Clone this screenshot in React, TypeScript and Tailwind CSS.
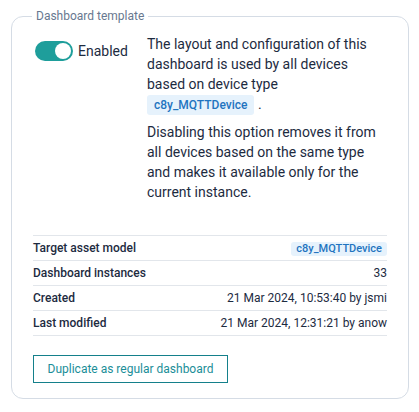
import React from "react";

const rows: { label: string; value: React.ReactNode }[] = [
  {
    label: "Target asset model",
    value: (
      <span className="inline-flex h-[14px] items-center rounded-[3px] bg-[#e6f2fc] px-[5px] text-[11px] font-medium leading-none text-[#1f74c0]">
        c8y_MQTTDevice
      </span>
    ),
  },
  { label: "Dashboard instances", value: "33" },
  { label: "Created", value: "21 Mar 2024, 10:53:40 by jsmi" },
  { label: "Last modified", value: "21 Mar 2024, 12:31:21 by anow" },
];

export default function App() {
  return (
    <div
      className="w-[419px] h-[412px] bg-white pt-[7px] pl-[11px] pr-[10px]"
      style={{ fontFamily: "Roboto, 'Liberation Sans', sans-serif" }}
    >
      <fieldset className="rounded-[12px] border border-[#d5dce5] px-[21px] pt-[9px] pb-[15px]">
        <legend className="px-[4px] text-[12px] leading-[18px] text-[#687890] -ml-[1px]">
          Dashboard template
        </legend>
        <div className="flex items-start">
          <div className="mt-[7px] ml-[2px] flex w-[112px] shrink-0 items-center gap-[5px]">
            <div className="flex h-[20px] w-[38px] items-center justify-end rounded-full bg-[#1e9e9b] px-[2px]">
              <div className="h-[16px] w-[16px] rounded-full bg-white" />
            </div>
            <span className="text-[14px] leading-[20px] text-[#1d2b3f]">Enabled</span>
          </div>
          <div className="w-[240px] text-[14px] leading-[20px] text-[#1d2b3f]">
            <p>
              The layout and configuration of this dashboard is used by all devices based on device type{" "}
              <span className="mt-[1px] inline-flex h-[20px] items-center rounded-[3px] bg-[#e6f2fc] px-[7px] text-[12px] font-medium text-[#1f74c0]">
                c8y_MQTTDevice
              </span>{" "}
              .
            </p>
            <p className="mt-[7px]">
              Disabling this option removes it from all devices based on the same type and makes it available only for the current instance.
            </p>
          </div>
        </div>
        <div className="mt-[33px] border-t border-[#e2e6eb]">
          {rows.map((r) => (
            <div
              key={r.label}
              className="flex h-[25px] items-center justify-between border-b border-[#e2e6eb] text-[12px] text-[#1d2b3f]"
            >
              <span className="font-medium">{r.label}</span>
              <span>{r.value}</span>
            </div>
          ))}
        </div>
        <button className="mt-[19px] h-[28px] w-[195px] border border-[#14808b] text-[12px] text-[#1b8e98]">
          Duplicate as regular dashboard
        </button>
      </fieldset>
    </div>
  );
}
